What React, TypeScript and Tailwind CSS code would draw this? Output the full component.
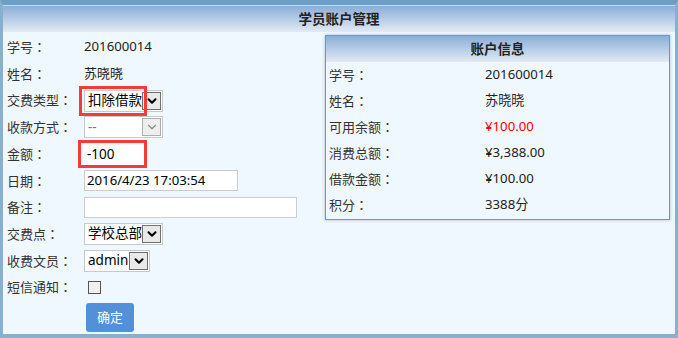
import { ChevronDown } from 'lucide-react';

const font = { fontFamily: '"Noto Sans", "Noto Sans CJK SC", sans-serif' };

// full-width colon drawn centred, as in the original page
function Label({ text, width }: { text: string; width: string }) {
  return (
    <span className={`${width} whitespace-nowrap text-[13px] text-[#333]`}>
      {text}
      <span style={{ fontFamily: '"Noto Sans CJK TC", sans-serif' }}>：</span>
    </span>
  );
}

function SelectBox({ text, width, disabled = false }: { text: string; width: string; disabled?: boolean }) {
  return (
    <div className={`flex h-[22px] items-center border border-[#c9c9c9] bg-white pl-[3px] pr-[1px] ${width}`}>
      <span className={`flex-1 whitespace-nowrap text-[13.5px] leading-none ${disabled ? 'text-[#777]' : 'text-black'}`}>{text}</span>
      <div
        className={`flex h-[18px] w-[19px] items-center justify-center border ${
          disabled ? 'border-[#b0b0b0] bg-[#eeeeee]' : 'border-[#6f6f6f] bg-[#e9e9e9]'
        }`}
      >
        <ChevronDown className={`h-[14px] w-[14px] ${disabled ? 'text-[#8a8a8a]' : 'text-black'}`} strokeWidth={disabled ? 2 : 3.5} />
      </div>
    </div>
  );
}

export default function App() {
  const rowCls = 'flex h-[26.7px] items-center';

  const info = [
    { label: '学号', value: '201600014' },
    { label: '姓名', value: '苏晓晓' },
    { label: '可用余额', value: '¥100.00', red: true },
    { label: '消费总额', value: '¥3,388.00' },
    { label: '借款金额', value: '¥100.00' },
    { label: '积分', value: '3388分' },
  ];

  return (
    <div className="h-[338px] w-[678px] bg-[#7aa5c9]" style={font}>
      <div className="flex h-full flex-col border-x-[3px] border-b-[4px] border-t-[5px] border-[#86afd0] border-t-[#6f9ec4]">
        {/* header */}
        <div className="flex h-[27px] items-center justify-center border-t border-[#c9dbeb] bg-gradient-to-b from-[#8cadd6] to-[#e2ebf4] text-[13.5px] font-bold text-[#222]">
          学员账户管理
        </div>

        <div className="flex flex-1 bg-[#f0f8ff]">
          {/* left form */}
          <div className="w-[322px] pl-[4px] pt-[2px]">
            <div className={rowCls}>
              <Label text="学号" width="w-[77px]" />
              <span className="text-[13.2px] text-[#222]">201600014</span>
            </div>
            <div className={rowCls}>
              <Label text="姓名" width="w-[77px]" />
              <span className="text-[13px] text-[#222]">苏晓晓</span>
            </div>
            <div className={rowCls}>
              <Label text="交费类型" width="w-[77px]" />
              <div className="relative">
                <SelectBox text="扣除借款" width="w-[79px]" />
                <div className="absolute left-[-5px] top-[-4px] h-[30px] w-[68px] border-[3px] border-[#f23b3b]" />
              </div>
            </div>
            <div className={rowCls}>
              <Label text="收款方式" width="w-[77px]" />
              <SelectBox text="--" width="w-[79px]" disabled />
            </div>
            <div className={rowCls}>
              <Label text="金额" width="w-[77px]" />
              <div className="relative">
                <div className="flex h-[21px] w-[60px] items-center bg-white pl-[3px] text-[13.5px] text-black">-100</div>
                <div className="absolute left-[-6px] top-[-4px] h-[28px] w-[69px] border-[3px] border-[#f23b3b]" />
              </div>
            </div>
            <div className={rowCls}>
              <Label text="日期" width="w-[77px]" />
              <div className="flex h-[21px] w-[154px] items-center border border-[#cccccc] bg-white pl-[2px] text-[13.2px] text-black">
                2016/4/23 17:03:54
              </div>
            </div>
            <div className={rowCls}>
              <Label text="备注" width="w-[77px]" />
              <div className="h-[21px] w-[213px] border border-[#cccccc] bg-white" />
            </div>
            <div className={rowCls}>
              <Label text="交费点" width="w-[77px]" />
              <SelectBox text="学校总部" width="w-[79px]" />
            </div>
            <div className={rowCls}>
              <Label text="收费文员" width="w-[77px]" />
              <SelectBox text="admin" width="w-[66px]" />
            </div>
            <div className={rowCls}>
              <Label text="短信通知" width="w-[77px]" />
              <div className="ml-[4px] h-[13px] w-[13px] border border-[#555] bg-[#f0f0f0]" />
            </div>
            <button className="ml-[79px] mt-[2px] h-[29px] w-[48px] rounded-[3px] bg-[#5290da] text-[13px] text-white">
              确定
            </button>
          </div>

          {/* right panel */}
          <div className="mt-[3px] h-[185px] w-[345px] border border-[#6f96c0] bg-[#f0f8ff] shadow-[0_0_3px_rgba(90,130,180,0.5)]">
            <div className="flex h-[26px] items-center justify-center bg-gradient-to-b from-[#8cadd6] to-[#e2ebf4] text-[13.5px] font-bold text-[#222]">
              账户信息
            </div>
            <div className="pl-[3px]">
              {info.map((row) => (
                <div key={row.label} className="flex h-[26px] items-center">
                  <Label text={row.label} width="w-[156px]" />
                  <span className={`text-[13.2px] ${row.red ? 'text-[#ff0000]' : 'text-[#222]'}`}>{row.value}</span>
                </div>
              ))}
            </div>
          </div>
        </div>
      </div>
    </div>
  );
}
